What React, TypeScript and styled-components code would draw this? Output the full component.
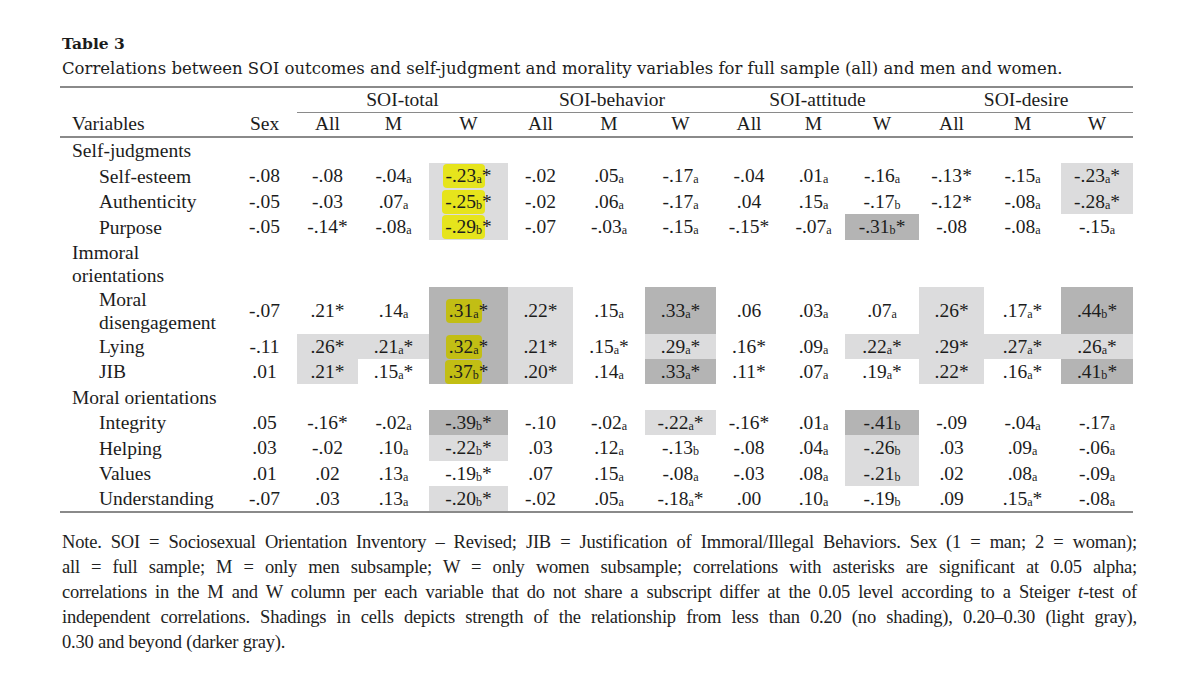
import React from 'react';
import styled, { createGlobalStyle } from 'styled-components';

type Shade = 'none' | 'light' | 'dark';

const GlobalStyle = createGlobalStyle`
    body {
        margin: 0;
        background: #fff;
        color: #1c1c1c;
    }
`;

const Page = styled.div`
    padding: 31px 0 0 60px;
    width: 1080px;
`;

const Title = styled.h2`
    margin: 0 0 0 2px;
    font-family: "DejaVu Serif", serif;
    font-weight: bold;
    font-size: 15.5px;
    line-height: 25px;
`;

const Caption = styled.p`
    margin: 0 0 5px 2px;
    font-family: "DejaVu Serif", serif;
    font-size: 16.5px;
    line-height: 25px;
`;

const Table = styled.table`
    width: 1073px;
    border-collapse: collapse;
    table-layout: fixed;
    font-family: "Liberation Serif", "Times New Roman", serif;
    font-size: 19.5px;
    border-top: 2px solid #8a8a8a;
    border-bottom: 2px solid #8a8a8a;

    th, td {
        padding: 0;
        font-weight: normal;
        white-space: nowrap;
    }
`;

const Col = styled.col<{ $w: number }>`
    width: ${p => p.$w}px;
`;

const HeadRow = styled.tr<{ $rule?: boolean }>`
    height: 25px;
    border-bottom: ${p => (p.$rule ? '2px solid #8a8a8a' : 'none')};
`;

const GroupHead = styled.th`
    text-align: center;
    border-bottom: 1.5px solid #8a8a8a;
`;

const ColHead = styled.th<{ $left?: boolean }>`
    text-align: ${p => (p.$left ? 'left' : 'center')};
    padding-left: ${p => (p.$left ? '12px' : '0')} !important;
`;

const Row = styled.tr<{ $h: number }>`
    height: ${p => p.$h}px;
`;

const Label = styled.td<{ $indent?: boolean; $double?: boolean }>`
    padding-left: ${p => (p.$indent ? '39px' : '12px')} !important;
    line-height: ${p => (p.$double ? '23px' : '25px')};
    white-space: normal !important;
`;

const Cell = styled.td<{ $shade: Shade }>`
    text-align: center;
    background: ${p =>
        p.$shade === 'dark' ? '#b4b4b4' : p.$shade === 'light' ? '#dcdcdd' : 'transparent'};
`;

const Sub = styled.sub`
    font-size: 0.62em;
    vertical-align: -0.05em;
    line-height: 0;
`;

const Marker = styled.span<{ $on: Shade }>`
    background: ${p => (p.$on === 'dark' ? '#c2be14' : '#e6e41c')};
    border-radius: 4px;
    padding: 1px 3px 2px 3px;
    margin: 0 -3px 0 -3px;
`;

const Note = styled.div`
    margin: 17px 0 0 2px;
    width: 1075px;
    font-family: "Liberation Serif", "Times New Roman", serif;
    font-size: 18.5px;
    letter-spacing: -0.2px;
    line-height: 25px;
    color: #222;
`;

const NoteLine = styled.span<{ $last?: boolean }>`
    display: block;
    text-align: justify;
    text-align-last: ${p => (p.$last ? 'left' : 'justify')};
`;

const widths = [172, 65, 61, 71, 79, 65, 72, 71, 66, 63, 74, 65, 77, 72];

type RowData = { label: string; indent?: boolean; double?: boolean; h: number; cells?: string[] };

// value:flags  L = light gray, D = dark gray, H = yellow marker
const rows: RowData[] = [
    { label: 'Self-judgments', h: 25 },
    { label: 'Self-esteem', indent: true, h: 26, cells: ['-.08', '-.08', '-.04a', '-.23a*:LH', '-.02', '.05a', '-.17a', '-.04', '.01a', '-.16a', '-.13*', '-.15a', '-.23a*:L'] },
    { label: 'Authenticity', indent: true, h: 25, cells: ['-.05', '-.03', '.07a', '-.25b*:LH', '-.02', '.06a', '-.17a', '.04', '.15a', '-.17b', '-.12*', '-.08a', '-.28a*:L'] },
    { label: 'Purpose', indent: true, h: 26, cells: ['-.05', '-.14*', '-.08a', '-.29b*:LH', '-.07', '-.03a', '-.15a', '-.15*', '-.07a', '-.31b*:D', '-.08', '-.08a', '-.15a'] },
    { label: 'Immoral orientations', double: true, h: 47 },
    { label: 'Moral disengagement', indent: true, double: true, h: 47, cells: ['-.07', '.21*', '.14a', '.31a*:DH', '.22*:L', '.15a', '.33a*:D', '.06', '.03a', '.07a', '.26*:L', '.17a*', '.44b*:D'] },
    { label: 'Lying', indent: true, h: 25, cells: ['-.11', '.26*:L', '.21a*:L', '.32a*:DH', '.21*:L', '.15a*', '.29a*:L', '.16*', '.09a', '.22a*:L', '.29*:L', '.27a*:L', '.26a*:L'] },
    { label: 'JIB', indent: true, h: 25, cells: ['.01', '.21*:L', '.15a*', '.37b*:DH', '.20*:L', '.14a', '.33a*:D', '.11*', '.07a', '.19a*', '.22*:L', '.16a*', '.41b*:D'] },
    { label: 'Moral orientations', h: 26 },
    { label: 'Integrity', indent: true, h: 24, cells: ['.05', '-.16*', '-.02a', '-.39b*:D', '-.10', '-.02a', '-.22a*:L', '-.16*', '.01a', '-.41b:D', '-.09', '-.04a', '-.17a'] },
    { label: 'Helping', indent: true, h: 26, cells: ['.03', '-.02', '.10a', '-.22b*:L', '.03', '.12a', '-.13b', '-.08', '.04a', '-.26b:L', '.03', '.09a', '-.06a'] },
    { label: 'Values', indent: true, h: 25, cells: ['.01', '.02', '.13a', '-.19b*', '.07', '.15a', '-.08a', '-.03', '.08a', '-.21b:L', '.02', '.08a', '-.09a'] },
    { label: 'Understanding', indent: true, h: 24, cells: ['-.07', '.03', '.13a', '-.20b*:L', '-.02', '.05a', '-.18a*', '.00', '.10a', '-.19b', '.09', '.15a*', '-.08a'] },
];

const Value: React.FC<{ raw: string }> = ({ raw }) => {
    const [text, flags = ''] = raw.split(':');
    const m = text.match(/^(-?\.\d\d)([ab]?)(\*?)$/);
    const num = m ? m[1] : text;
    const sub = m ? m[2] : '';
    const star = m ? m[3] : '';
    const shade: Shade = flags.includes('D') ? 'dark' : flags.includes('L') ? 'light' : 'none';
    const body = (
        <>
            {num}
            {sub && <Sub>{sub}</Sub>}
        </>
    );
    return (
        <Cell $shade={shade}>
            {flags.includes('H') ? <Marker $on={shade}>{body}</Marker> : body}
            {star}
        </Cell>
    );
};

const groups = ['SOI-total', 'SOI-behavior', 'SOI-attitude', 'SOI-desire'];

const App: React.FC = () => {
    return (
        <Page>
            <GlobalStyle />
            <Title>Table 3</Title>
            <Caption>
                Correlations between SOI outcomes and self-judgment and morality variables for full sample (all) and men and women.
            </Caption>
            <Table>
                <colgroup>
                    {widths.map((w, i) => (
                        <Col key={i} $w={w} />
                    ))}
                </colgroup>
                <thead>
                    <HeadRow>
                        <th />
                        <th />
                        {groups.map(g => (
                            <GroupHead key={g} colSpan={3}>{g}</GroupHead>
                        ))}
                    </HeadRow>
                    <HeadRow $rule>
                        <ColHead $left>Variables</ColHead>
                        <ColHead>Sex</ColHead>
                        {groups.map(g => (
                            <React.Fragment key={g}>
                                <ColHead>All</ColHead>
                                <ColHead>M</ColHead>
                                <ColHead>W</ColHead>
                            </React.Fragment>
                        ))}
                    </HeadRow>
                </thead>
                <tbody>
                    {rows.map(r => (
                        <Row key={r.label} $h={r.h}>
                            <Label $indent={r.indent} $double={r.double}>
                                {r.double ? (
                                    <>
                                        {r.label.split(' ')[0]}
                                        <br />
                                        {r.label.split(' ')[1]}
                                    </>
                                ) : (
                                    r.label
                                )}
                            </Label>
                            {r.cells
                                ? r.cells.map((c, i) => <Value key={i} raw={c} />)
                                : Array.from({ length: 13 }, (_, i) => <Cell key={i} $shade="none" />)}
                        </Row>
                    ))}
                </tbody>
            </Table>
            <Note>
                <NoteLine>
                    Note. SOI = Sociosexual Orientation Inventory – Revised; JIB = Justification of Immoral/Illegal Behaviors. Sex (1 = man; 2 = woman);
                </NoteLine>
                <NoteLine>
                    all = full sample; M = only men subsample; W = only women subsample; correlations with asterisks are significant at 0.05 alpha;
                </NoteLine>
                <NoteLine>
                    correlations in the M and W column per each variable that do not share a subscript differ at the 0.05 level according to a Steiger <i>t</i>-test of
                </NoteLine>
                <NoteLine>
                    independent correlations. Shadings in cells depicts strength of the relationship from less than 0.20 (no shading), 0.20–0.30 (light gray),
                </NoteLine>
                <NoteLine $last>0.30 and beyond (darker gray).</NoteLine>
            </Note>
        </Page>
    );
};

export default App;
